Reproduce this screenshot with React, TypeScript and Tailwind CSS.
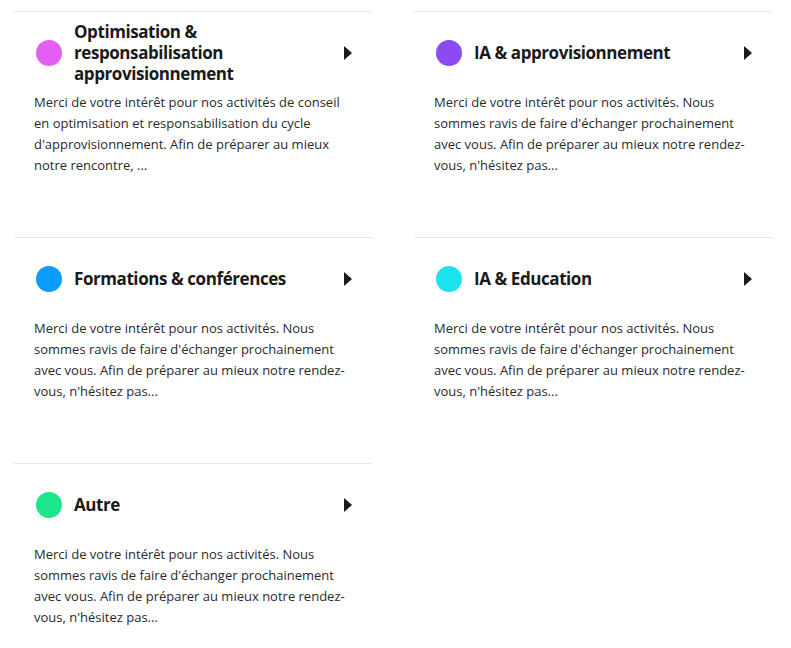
const cards = [
  {
    color: 'bg-[#e25ef5]',
    title: 'Optimisation & responsabilisation approvisionnement',
    text: "Merci de votre intérêt pour nos activités de conseil en optimisation et responsabilisation du cycle d'approvisionnement. Afin de préparer au mieux notre rencontre, ...",
  },
  {
    color: 'bg-[#8c4bf2]',
    title: 'IA & approvisionnement',
    text: "Merci de votre intérêt pour nos activités. Nous sommes ravis de faire d'échanger prochainement avec vous. Afin de préparer au mieux notre rendez-vous, n'hésitez pas...",
  },
  {
    color: 'bg-[#0a9cff]',
    title: 'Formations & conférences',
    text: "Merci de votre intérêt pour nos activités. Nous sommes ravis de faire d'échanger prochainement avec vous. Afin de préparer au mieux notre rendez-vous, n'hésitez pas...",
  },
  {
    color: 'bg-[#1ae3ec]',
    title: 'IA & Education',
    text: "Merci de votre intérêt pour nos activités. Nous sommes ravis de faire d'échanger prochainement avec vous. Afin de préparer au mieux notre rendez-vous, n'hésitez pas...",
  },
  {
    color: 'bg-[#1de68a]',
    title: 'Autre',
    text: "Merci de votre intérêt pour nos activités. Nous sommes ravis de faire d'échanger prochainement avec vous. Afin de préparer au mieux notre rendez-vous, n'hésitez pas...",
  },
];

function EventCard({ color, title, text }: { color: string; title: string; text: string }) {
  return (
    <div className="h-[226px] border-t border-[#e6e6e6] pt-[9px]">
      <div className="flex h-[63px] items-center pl-[22px] pr-[20px]">
        <span className={`h-[26px] w-[26px] shrink-0 rounded-full ${color}`} />
        <h3 className="ml-3 flex-1 text-[17px] font-bold leading-[21px] tracking-[-0.025em] text-[#1a1a1a]">
          {title}
        </h3>
        <span className="ml-3 h-0 w-0 border-y-[7px] border-l-[8px] border-y-transparent border-l-[#1a1a1a]" />
      </div>
      <p className="mt-2 pl-5 pr-4 text-[13px] leading-[21px] text-[#2a2a2a]">{text}</p>
    </div>
  );
}

export default function App() {
  return (
    <div className="bg-white pt-[11px] font-['Open_Sans',sans-serif]">
      <div className="grid w-[772px] grid-cols-2 gap-x-[42px] pl-[14px]">
        {cards.map((c) => (
          <EventCard key={c.title} {...c} />
        ))}
      </div>
    </div>
  );
}
